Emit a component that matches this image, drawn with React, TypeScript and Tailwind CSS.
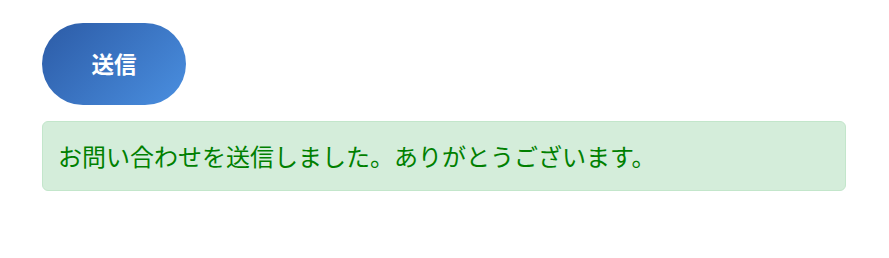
export default function App() {
  return (
    <div
      className="bg-white w-[889px] h-[258px] pl-[42px] pr-[43px] pt-[23px] flex flex-col items-start gap-4"
      style={{ fontFamily: '"Noto Sans CJK JP", "Noto Sans", sans-serif' }}
    >
      <button className="w-[144px] h-[82px] rounded-full bg-[linear-gradient(135deg,#2c5ba6,#4a8fe0)] text-white text-[22.5px] font-bold flex items-center justify-center">
        送信
      </button>
      <div className="w-full rounded-md border border-[#c3e6cb] bg-[#d4edda] px-[15px] py-4 text-[24px] leading-[36px] text-[#008000]">
        お問い合わせを送信しました。ありがとうございます。
      </div>
    </div>
  );
}
